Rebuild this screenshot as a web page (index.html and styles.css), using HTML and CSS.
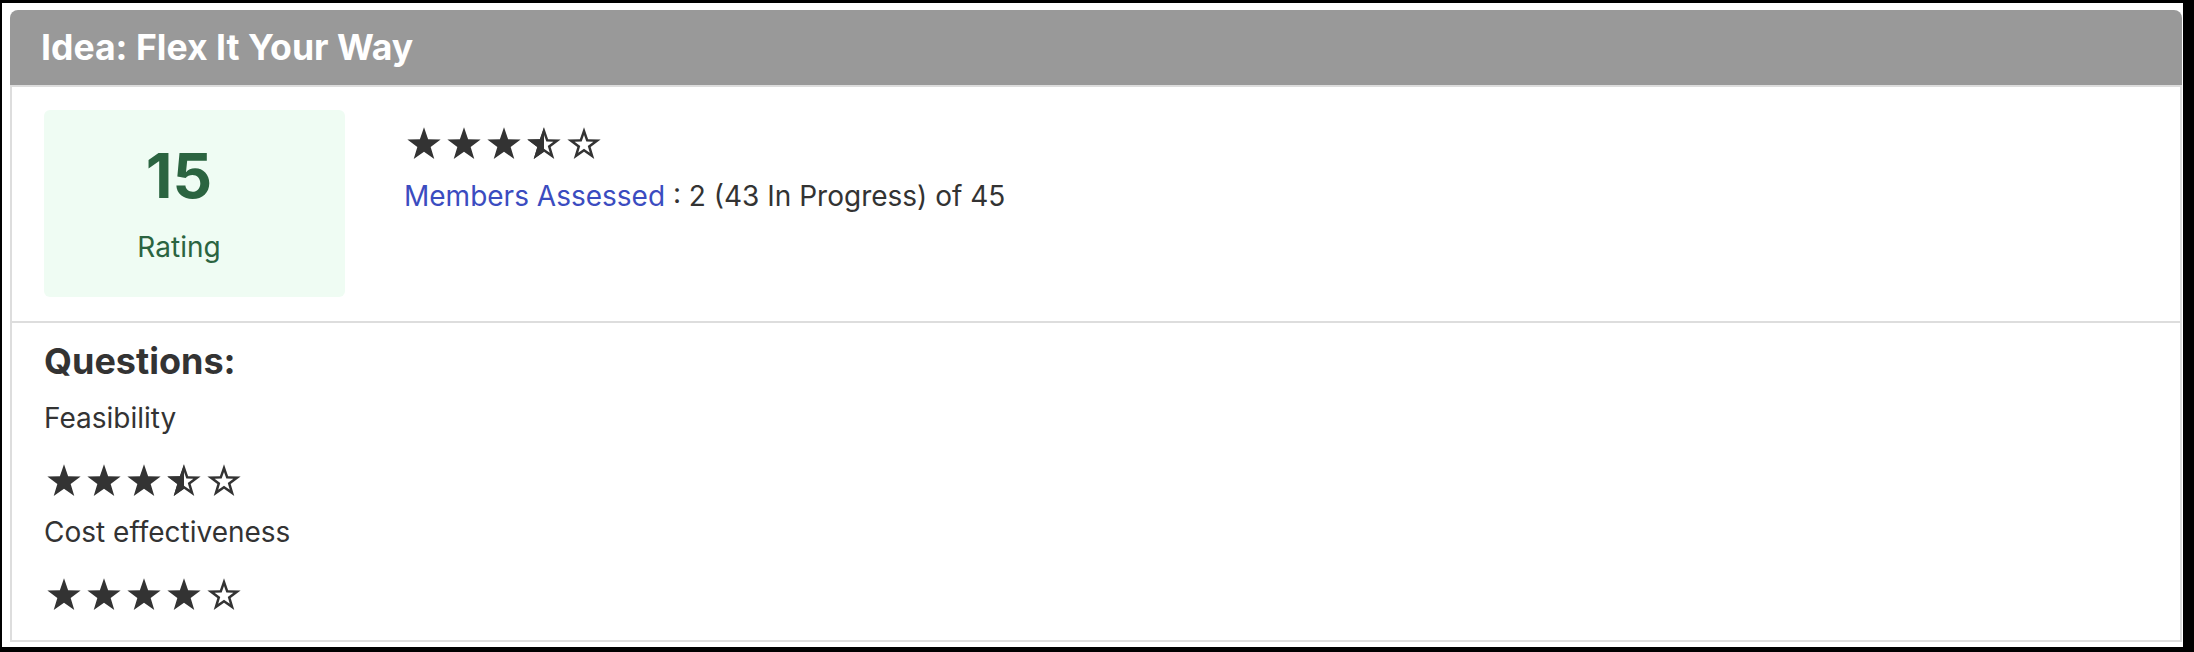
FILE: index.html
```html
<!DOCTYPE html>
<html lang="en">
<head>
  <meta charset="UTF-8" />
  <meta name="viewport" content="width=device-width, initial-scale=1.0"/>
  <title>Idea Assessment</title>
  <link rel="stylesheet" href="styles.css">
</head>
<body>

<svg class="icon-defs" width="0" height="0" aria-hidden="true">
  <defs>
    <symbol id="star-full" viewBox="-3 0 40 33">
      <path d="M17 .3L21.11 12.14 33.64 12.39 23.66 19.96 27.29 31.96 17 24.8 6.71 31.96 10.34 19.96 .36 12.39 12.89 12.14Z"/>
    </symbol>
    <symbol id="star-empty" viewBox="-3 0 40 33">
      <path fill-rule="evenodd" d="M17 .3L21.11 12.14 33.64 12.39 23.66 19.96 27.29 31.96 17 24.8 6.71 31.96 10.34 19.96 .36 12.39 12.89 12.14Z M17 7.93L14.68 14.61 7.62 14.75 13.24 19.02 11.2 25.79 17 21.75 22.8 25.79 20.76 19.02 26.38 14.75 19.32 14.61Z"/>
    </symbol>
    <symbol id="star-half" viewBox="-3 0 40 33">
      <path fill-rule="evenodd" d="M17 .3L21.11 12.14 33.64 12.39 23.66 19.96 27.29 31.96 17 24.8 6.71 31.96 10.34 19.96 .36 12.39 12.89 12.14Z M17 7.93L14.68 14.61 7.62 14.75 13.24 19.02 11.2 25.79 17 21.75 22.8 25.79 20.76 19.02 26.38 14.75 19.32 14.61Z"/>
      <path d="M17 .3L12.89 12.14 .36 12.39 10.34 19.96 6.71 31.96 17 24.8Z"/>
    </symbol>
  </defs>
</svg>

<div class="frame">
  <div class="card">
    <div class="card-header">
      <h1 class="card-title">Idea: Flex It Your Way</h1>
    </div>

    <div class="card-body">
      <div class="summary">
        <div class="rating-box">
          <div class="rating-value">15</div>
          <div class="rating-label">Rating</div>
        </div>
        <div class="summary-info">
          <div class="stars">
            <svg class="star"><use href="#star-full"/></svg>
            <svg class="star"><use href="#star-full"/></svg>
            <svg class="star"><use href="#star-full"/></svg>
            <svg class="star"><use href="#star-half"/></svg>
            <svg class="star"><use href="#star-empty"/></svg>
          </div>
          <p class="assessed"><a class="assessed-link" href="#">Members Assessed</a> : 2 (43 In Progress) of 45</p>
        </div>
      </div>

      <div class="questions">
        <h2 class="questions-title">Questions:</h2>

        <div class="question">
          <p class="question-name">Feasibility</p>
          <div class="stars">
            <svg class="star"><use href="#star-full"/></svg>
            <svg class="star"><use href="#star-full"/></svg>
            <svg class="star"><use href="#star-full"/></svg>
            <svg class="star"><use href="#star-half"/></svg>
            <svg class="star"><use href="#star-empty"/></svg>
          </div>
        </div>

        <div class="question">
          <p class="question-name">Cost effectiveness</p>
          <div class="stars">
            <svg class="star"><use href="#star-full"/></svg>
            <svg class="star"><use href="#star-full"/></svg>
            <svg class="star"><use href="#star-full"/></svg>
            <svg class="star"><use href="#star-full"/></svg>
            <svg class="star"><use href="#star-empty"/></svg>
          </div>
        </div>
      </div>
    </div>
  </div>
</div>

</body>
</html>
```

FILE: styles.css
```css
body {
  margin: 0;
  background: #000;
  font-family: Inter, "Liberation Sans", sans-serif;
  color: #333;
}
.icon-defs { position: absolute; width: 0; height: 0; overflow: hidden; }

.frame {
  background: #fff;
  margin: 3px 11px 5px 2px;
  padding: 7px 1px 5px 8px;
}

.card-header {
  display: flex;
  align-items: center;
  height: 75px;
  padding: 0 31px;
  background: #999;
  border-radius: 8px 8px 0 0;
}
.card-title { margin: 0; color: #fff; font-size: 35.6px; font-weight: 700; }

.card-body { border: 2px solid #ddd; }

/* top part: rating + overall stars */
.summary {
  display: flex;
  align-items: flex-start;
  padding: 23px 32px 24px;
  border-bottom: 2px solid #ddd;
}
.rating-box {
  width: 270px;
  padding: 29px 31px 32px 0;
  background: #effcf3;
  border-radius: 6px;
  text-align: center;
  color: #2b6440;
}
.rating-value { font-size: 62px; font-weight: 700; line-height: 74px; margin-bottom: 17px; }
.rating-label { font-size: 28px; line-height: 35px; }

.summary-info { margin-left: 59px; padding-top: 17px; }
.assessed { margin: 15px 0 0; font-size: 28px; line-height: 42px; }
.assessed-link { color: #3b4cc0; text-decoration: none; }

.stars { display: flex; }
.star { width: 40px; height: 33px; fill: #333; }

/* questions */
.questions { padding: 15px 32px 15px; }
.questions-title { margin: 0 0 13px; font-size: 36px; line-height: 46px; font-weight: 700; }
.question-name { margin: 0; font-size: 28px; line-height: 42px; }
.question .stars { margin: 25px 0 14px; }
```
